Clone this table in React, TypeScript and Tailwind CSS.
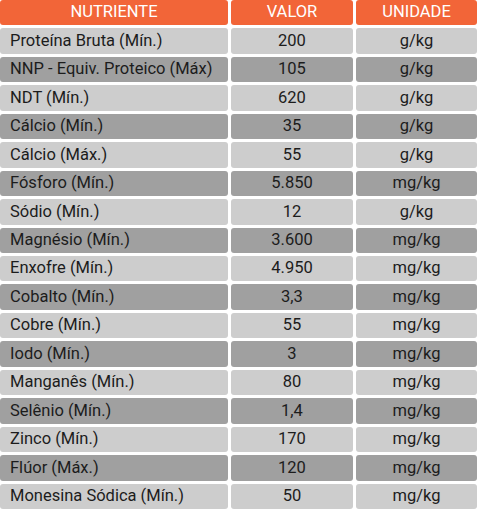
const rows: [string, string, string][] = [
  ["Proteína Bruta (Mín.)", "200", "g/kg"],
  ["NNP - Equiv. Proteico (Máx)", "105", "g/kg"],
  ["NDT (Mín.)", "620", "g/kg"],
  ["Cálcio (Mín.)", "35", "g/kg"],
  ["Cálcio (Máx.)", "55", "g/kg"],
  ["Fósforo (Mín.)", "5.850", "mg/kg"],
  ["Sódio (Mín.)", "12", "g/kg"],
  ["Magnésio (Mín.)", "3.600", "mg/kg"],
  ["Enxofre (Mín.)", "4.950", "mg/kg"],
  ["Cobalto (Mín.)", "3,3", "mg/kg"],
  ["Cobre (Mín.)", "55", "mg/kg"],
  ["Iodo (Mín.)", "3", "mg/kg"],
  ["Manganês (Mín.)", "80", "mg/kg"],
  ["Selênio (Mín.)", "1,4", "mg/kg"],
  ["Zinco (Mín.)", "170", "mg/kg"],
  ["Flúor (Máx.)", "120", "mg/kg"],
  ["Monesina Sódica (Mín.)", "50", "mg/kg"],
];

export default function App() {
  return (
    <div
      className="w-[478px] h-[509px] bg-white grid grid-cols-[228px_122px_121px] grid-rows-[repeat(18,1fr)] gap-[3px] text-[16.5px] text-[#1c1c1c] leading-none"
      style={{ fontFamily: "Roboto, 'Liberation Sans', sans-serif" }}
    >
      {/* Header */}
      <div className="bg-[#f26538] rounded-[3px] text-white flex items-center justify-center">NUTRIENTE</div>
      <div className="bg-[#f26538] rounded-[3px] text-white flex items-center justify-center">VALOR</div>
      <div className="bg-[#f26538] rounded-[3px] text-white flex items-center justify-center">UNIDADE</div>

      {rows.map(([name, value, unit], i) => {
        const bg = i % 2 === 0 ? "bg-[#cdcdcd]" : "bg-[#a0a0a0]";
        return [
          <div key={`n${i}`} className={`${bg} rounded-[3px] flex items-center pl-[10px]`}>{name}</div>,
          <div key={`v${i}`} className={`${bg} rounded-[3px] flex items-center justify-center`}>{value}</div>,
          <div key={`u${i}`} className={`${bg} rounded-[3px] flex items-center justify-center`}>{unit}</div>,
        ];
      })}
    </div>
  );
}
